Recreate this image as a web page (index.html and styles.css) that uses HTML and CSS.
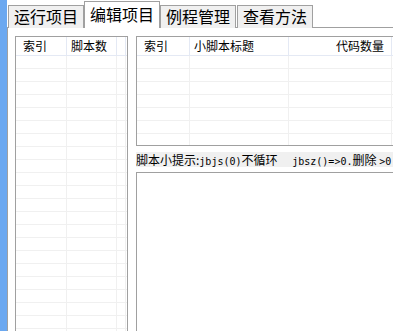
FILE: index.html
```html
<!DOCTYPE html>
<html lang="zh">
<head>
    <meta charset="UTF-8">
    <title>编辑项目</title>
    <link rel="stylesheet" href="styles.css">
</head>
<body>
    <div class="app">
        <div class="side"></div>
        <div class="main">
            <div class="tabs">
                <div class="tab">运行项目</div>
                <div class="tab active">编辑项目</div>
                <div class="tab">例程管理</div>
                <div class="tab">查看方法</div>
            </div>
            <div class="page">
                <div class="list list-left">
                    <div class="list-head">
                        <div class="cell c-idx">索引</div>
                        <div class="cell c-num">脚本数</div>
                        <div class="cell c-fill"></div>
                    </div>
                    <div class="list-body">
                        <div class="cell c-idx"></div>
                        <div class="cell c-num"></div>
                        <div class="cell c-fill"></div>
                    </div>
                </div>
                <div class="right">
                    <div class="list list-top">
                        <div class="list-head">
                            <div class="cell r-idx">索引</div>
                            <div class="cell r-title">小脚本标题</div>
                            <div class="cell r-count">代码数量</div>
                        </div>
                        <div class="list-body">
                            <div class="cell r-idx"></div>
                            <div class="cell r-title"></div>
                            <div class="cell r-count"></div>
                        </div>
                    </div>
                    <div class="hint">脚本小提示:<span class="mono">jbjs(0)</span>不循环 <span class="mono">  jbsz()=&gt;0.</span>删除 <span class="mono">&gt;0</span></div>
                    <div class="textbox"></div>
                </div>
            </div>
        </div>
    </div>
</body>
</html>
```

FILE: styles.css
```css
* {
    margin: 0;
    padding: 0;
    box-sizing: border-box;
}

body {
    background: #fff;
    overflow: hidden;
    font-family: "Noto Sans CJK SC", sans-serif;
    color: #000;
}

.app {
    display: flex;
    height: 331px;
    width: 393px;
    overflow: hidden;
}

.side {
    width: 7px;
    flex-shrink: 0;
    background: #6ba8f0;
}

.main {
    flex: 1;
    display: flex;
    flex-direction: column;
    min-width: 0;
}

.tabs {
    height: 28px;
    display: flex;
    align-items: flex-end;
    padding-left: 1px;
    border-bottom: 1px solid #a0a0a0;
    flex-shrink: 0;
}

.tab {
    height: 23px;
    padding: 0 5px;
    font-size: 16px;
    line-height: 21px;
    background: #f0f0f0;
    border: 1px solid #a0a0a0;
    border-bottom: none;
    margin-right: 1px;
    margin-bottom: -1px;
    white-space: nowrap;
}

.tab.active {
    height: 27px;
    line-height: 25px;
    background: #fff;
    margin-left: -1px;
    margin-right: 0;
    position: relative;
    z-index: 1;
}

.page {
    flex: 1;
    display: flex;
    gap: 8px;
    padding: 8px 0 0 7px;
    border-left: 1px solid #a0a0a0;
    min-height: 0;
}

.list {
    border: 1px solid #a0a0a0;
    display: flex;
    flex-direction: column;
    background: #fff;
}

.list-left {
    width: 113px;
    flex-shrink: 0;
    height: 320px;
}

.list-head {
    display: flex;
    height: 19px;
    border-bottom: 1px solid #e4e9f4;
    font-size: 12px;
    line-height: 17px;
    flex-shrink: 0;
}

.list-head .cell {
    border-right: 1px solid #e4e9f4;
    white-space: nowrap;
}

.list-body {
    display: flex;
    flex: 1;
    background: repeating-linear-gradient(
        to bottom,
        transparent 0,
        transparent 12px,
        #f0f0f0 12px,
        #f0f0f0 13px
    );
}

.list-body .cell {
    border-right: 1px solid #f0f0f0;
}

.c-idx {
    width: 51px;
    padding-left: 7px;
}

.c-num {
    width: 50px;
    padding-left: 4px;
}

.c-fill {
    width: 9px;
}

.right {
    width: 300px;
    flex-shrink: 0;
    display: flex;
    flex-direction: column;
}

.list-top {
    height: 110px;
    border-right: none;
}

.r-idx {
    width: 53px;
    padding-left: 7px;
}

.r-title {
    width: 99px;
    padding-left: 4px;
}

.r-count {
    width: 103px;
    text-align: right;
    padding-right: 7px;
}

.hint {
    margin-top: 6px;
    height: 15px;
    width: 258px;
    background: #f0f0f0;
    font-size: 12px;
    line-height: 15px;
    white-space: pre;
    overflow: hidden;
}

.mono {
    font-family: "DejaVu Sans Mono", monospace;
    font-size: 10px;
}

.textbox {
    margin-top: 5px;
    flex: 1;
    border: 1px solid #a0a0a0;
    border-right: none;
    border-bottom: none;
    background: #fff;
}
```
